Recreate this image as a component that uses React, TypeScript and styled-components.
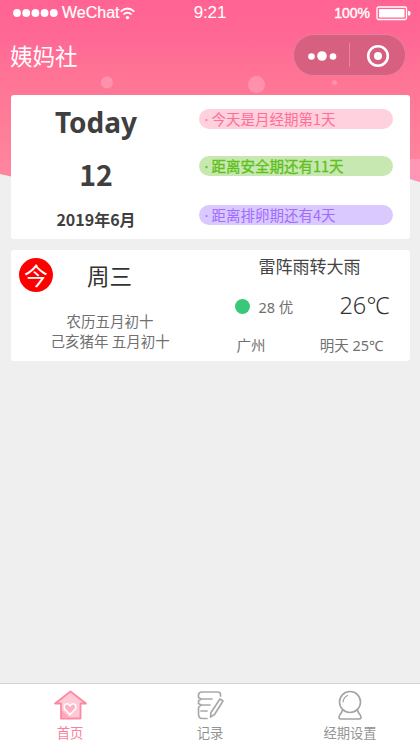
import React from "react";
import styled, { createGlobalStyle } from "styled-components";

const GlobalStyle = createGlobalStyle`
  * { box-sizing: border-box; }
  body {
    margin: 0;
    background: #efefef;
    font-family: "Noto Sans CJK SC", sans-serif;
    color: #3f3f3f;
  }
`;

const Page = styled.div`
  position: relative;
  width: 420px;
  height: 746px;
  display: flex;
  flex-direction: column;
  overflow: hidden;
  background: #efefef;
`;

const Backdrop = styled.svg`
  position: absolute;
  top: 0;
  left: 0;
`;

const StatusBar = styled.header`
  position: relative;
  height: 26px;
  padding: 0 9px 0 13px;
  display: grid;
  grid-template-columns: 1fr auto 1fr;
  align-items: center;
  color: #fff;
  font-family: "Liberation Sans", Arial, sans-serif;
`;

const StatusGroup = styled.div<{ $end?: boolean }>`
  display: flex;
  align-items: center;
  justify-content: ${(p) => (p.$end ? "flex-end" : "flex-start")};
`;

const Carrier = styled.span`
  margin-left: 4px;
  font-size: 16px;
  line-height: 26px;
  -webkit-text-stroke: 0.2px #fff;
`;

const Clock = styled.span`
  margin-left: -4px;
  font-size: 17px;
  line-height: 24px;
  letter-spacing: -0.2px;
`;

const Percent = styled.span`
  margin-right: 6px;
  font-size: 14px;
  line-height: 26px;
  -webkit-text-stroke: 0.4px #fff;
`;

const TitleBar = styled.div`
  position: relative;
  height: 69px;
  padding: 8px 14px 0 10px;
  display: flex;
  justify-content: space-between;
  align-items: flex-start;
`;

const Title = styled.h1`
  margin: 0;
  color: #fff;
  font-size: 22.5px;
  font-weight: 400;
  line-height: 43px;
`;

const Capsule = styled.div`
  width: 113px;
  height: 42px;
  display: flex;
  align-items: center;
  border: 1px solid #e5809d;
  border-radius: 21px;
  background: #d75f80;
`;

const CapsuleButton = styled.button`
  flex: 1;
  height: 40px;
  padding: 2px 0 0;
  display: flex;
  align-items: center;
  justify-content: center;
  border: 0;
  background: none;
`;

const CapsuleDivider = styled.span`
  width: 1px;
  height: 24px;
  background: #e8829f;
`;

const Card = styled.section<{ $height: number }>`
  position: relative;
  width: 399px;
  height: ${(p) => p.$height}px;
  margin: 0 0 11px 10.5px;
  display: grid;
  grid-template-columns: 171px 1fr;
  border-radius: 3px;
  background: #fff;
`;

const DateColumn = styled.div`
  display: flex;
  flex-direction: column;
  align-items: center;
  font-weight: 700;
`;

const Today = styled.div`
  height: 56px;
  font-family: "Noto Sans", sans-serif;
  font-size: 28px;
  line-height: 55px;
`;

const Day = styled.div`
  height: 48px;
  font-size: 28.5px;
  line-height: 46px;
`;

const Month = styled.div`
  height: 40px;
  font-size: 16px;
  line-height: 40px;
`;

const PillList = styled.ul`
  width: 194px;
  margin: 14px 0 0 17px;
  padding: 0;
  display: grid;
  grid-template-rows: 47px 49px 20px;
  align-content: start;
  list-style: none;
`;

const Pill = styled.li<{ $bg: string; $fg: string; $heavy?: boolean }>`
  height: 20px;
  padding-left: 6px;
  display: flex;
  border-radius: 10px;
  background: ${(p) => p.$bg};
  color: ${(p) => p.$fg};
  font-size: 14.5px;
  line-height: 20px;
  white-space: nowrap;
  -webkit-text-stroke: ${(p) => (p.$heavy ? 0.3 : 0)}px ${(p) => p.$fg};
`;

const Bullet = styled.span`
  width: 7px;
  overflow: hidden;
  font-family: "Noto Sans", sans-serif;
`;

const LunarColumn = styled.div`
  display: flex;
  flex-direction: column;
`;

const WeekRow = styled.div`
  height: 61px;
  padding: 8px 0 0 8.500px;
  display: flex;
`;

const TodayBadge = styled.span`
  width: 34px;
  height: 34px;
  flex: none;
  border-radius: 50%;
  background: #ff0000;
  color: #fff;
  font-size: 24px;
  line-height: 34px;
  text-align: center;
`;

const Weekday = styled.span`
  margin-left: 34px;
  color: #333;
  font-size: 22.5px;
  line-height: 35px;
`;

const Lunar = styled.div<{ $shift: number }>`
  height: 20px;
  padding-left: ${(p) => p.$shift}px;
  color: #707070;
  font-size: 14.5px;
  line-height: 20px;
  white-space: nowrap;
`;

const Weather = styled.div`
  display: flex;
  flex-direction: column;
  padding: 0 26px 0 55px;
  color: #707070;
  font-family: "Noto Sans", "Noto Sans CJK SC", sans-serif;
  font-size: 14.5px;
`;

const Condition = styled.div`
  height: 36px;
  padding-left: 22px;
  color: #444;
  font-size: 17px;
  line-height: 34px;
`;

const AirRow = styled.div`
  height: 40px;
  margin-right: -6px;
  display: flex;
  align-items: center;
`;

const AirDot = styled.span`
  width: 15px;
  height: 15px;
  margin-left: -2px;
  border-radius: 50%;
  background: #39c877;
`;

const AirText = styled.span`
  flex: 1;
  margin-left: 9px;
`;

const Temperature = styled.span`
  color: #333;
  font-weight: 300;
  font-size: 23.5px;
  line-height: 36px;
  margin-top: -3px;
`;

const CityRow = styled.div`
  display: flex;
  justify-content: space-between;
  line-height: 39px;
`;

const TabBar = styled.nav`
  height: 63px;
  margin-top: auto;
  display: grid;
  grid-template-columns: repeat(3, 1fr);
  border-top: 1px solid #d3d3d3;
  background: #fff;
`;

const Tab = styled.button<{ $active?: boolean }>`
  padding: 4px 0 0;
  display: flex;
  flex-direction: column;
  align-items: center;
  border: 0;
  background: none;
  color: ${(p) => (p.$active ? "#fb7f9c" : "#939393")};
  font-family: inherit;
  font-size: 13.3px;
  line-height: 20px;
`;

const TabIcon = styled.svg`
  display: block;
  margin-bottom: 1px;
`;

const pills = [
  { text: "今天是月经期第1天", bg: "#ffd1de", fg: "#ff6e94", heavy: false },
  { text: "距离安全期还有11天", bg: "#c7e9b1", fg: "#5fbf1c", heavy: true },
  { text: "距离排卵期还有4天", bg: "#dac9ff", fg: "#a26cff", heavy: false },
];

function HeaderBackdrop() {
  return (
    <Backdrop width="420" height="190" viewBox="0 0 420 190">
      <defs>
        <linearGradient id="sky" x1="0" y1="0" x2="0" y2="1">
          <stop offset="0" stopColor="#ff6393" />
          <stop offset="0.2" stopColor="#ff6895" />
          <stop offset="0.45" stopColor="#ff7595" />
          <stop offset="0.75" stopColor="#ff7f99" />
          <stop offset="1" stopColor="#ff879f" />
        </linearGradient>
      </defs>
      <path d="M0 0H420V182L409 178.500L300 158H100L11 176.500L0 174Z" fill="url(#sky)" />
      <path d="M409 159H420V182L409 178.500Z" fill="#ff96b4" />
      <circle cx="107" cy="82.500" r="6" fill="#ff91ac" />
      <circle cx="256.500" cy="84.500" r="8.500" fill="#ff91ac" />
      <circle cx="334.500" cy="82.500" r="2.500" fill="#ff91ac" />
    </Backdrop>
  );
}

function SignalDots() {
  return (
    <svg width="45" height="10" viewBox="0 0 45 10" fill="#fff">
      {[4, 13.2, 22.4, 31.6, 40.8].map((x) => (
        <circle key={x} cx={x} cy="5" r="3.900" />
      ))}
    </svg>
  );
}

function WifiIcon() {
  return (
    <svg width="15" height="13" viewBox="0 0 15 13" fill="none" stroke="#fff" strokeWidth="1.700">
      <path d="M0.700 4.600Q7.500 -1.600 14.300 4.600" />
      <path d="M3.300 7.500Q7.500 3.600 11.700 7.500" />
      <circle cx="7.500" cy="10.600" r="1.700" fill="#fff" stroke="none" />
    </svg>
  );
}

function BatteryIcon() {
  return (
    <svg width="35" height="15" viewBox="0 0 35 15">
      <rect x="1" y="1" width="29.500" height="12.500" rx="1.500" fill="none" stroke="#fff" strokeWidth="1.300" />
      <rect x="3" y="3" width="25.500" height="8.500" rx="0.500" fill="#fff" />
      <path d="M32 5H33Q34.500 5 34.500 6.500V8Q34.500 9.500 33 9.500H32Z" fill="#fff" />
    </svg>
  );
}

function HomeIcon() {
  return (
    <TabIcon width="36" height="34" viewBox="0 0 36 34">
      <path d="M18.500 3.500L3 15.500H9V30.500H28.500V15.500H34Z" fill="#ffcad6" stroke="#fb8aa5" strokeWidth="1.800" strokeLinejoin="round" />
      <path d="M10 22L18 30H10Z" fill="#ffa6bb" />
      <path d="M18 26.500L12.800 21Q11 17.500 14 16Q16.600 15.300 18 18Q19.500 15.300 22 16Q25 17.500 23.200 21Z" fill="#ffb2c4" stroke="#fff" strokeWidth="1.500" />
    </TabIcon>
  );
}

function NoteIcon() {
  return (
    <TabIcon width="32" height="34" viewBox="0 0 32 34" fill="none" stroke="#a9a9a9" strokeWidth="1.700" strokeLinecap="round" strokeLinejoin="round">
      <path d="M26.500 8V6.500Q26.500 4 23.500 4H8Q4.500 4 4.500 7V9.500L7 11L4.500 13V15.500L7 17L4.500 19.500V26Q4.500 30.500 8 30.500H13" />
      <path d="M7 11H18M7 17H16M7 23H13" />
      <path d="M26 11L29 13L20.500 26.500L16.500 29L17 24.500Z" />
    </TabIcon>
  );
}

function CrystalIcon() {
  return (
    <TabIcon width="34" height="34" viewBox="0 0 34 34" fill="none" stroke="#a3a3a3" strokeWidth="1.600" strokeLinecap="round" strokeLinejoin="round">
      <circle cx="17" cy="14" r="10.500" />
      <path d="M10 14Q10.500 9.500 14.500 7.500" strokeWidth="1.200" />
      <path d="M9.500 22Q9 24.500 6.500 27.500Q5 31 8 31H26Q29 31 27.500 27.500Q25 24.500 24.500 22" />
    </TabIcon>
  );
}

export default function App() {
  return (
    <Page>
      <GlobalStyle />
      <HeaderBackdrop />
      <StatusBar>
        <StatusGroup>
          <SignalDots />
          <Carrier>WeChat</Carrier>
          <WifiIcon />
        </StatusGroup>
        <Clock>9:21</Clock>
        <StatusGroup $end>
          <Percent>100%</Percent>
          <BatteryIcon />
        </StatusGroup>
      </StatusBar>
      <TitleBar>
        <Title>姨妈社</Title>
        <Capsule>
          <CapsuleButton aria-label="More">
            <svg width="30" height="12" viewBox="0 0 30 12" fill="#fff">
              <circle cx="4.500" cy="6.500" r="3.300" />
              <circle cx="15" cy="6" r="4.800" />
              <circle cx="26" cy="6.500" r="3.300" />
            </svg>
          </CapsuleButton>
          <CapsuleDivider />
          <CapsuleButton aria-label="Close">
            <svg width="24" height="24" viewBox="0 0 24 24">
              <circle cx="12" cy="12" r="9.800" fill="none" stroke="#fff" strokeWidth="2.600" />
              <circle cx="12" cy="12" r="4" fill="#fff" />
            </svg>
          </CapsuleButton>
        </Capsule>
      </TitleBar>

      <Card $height={144}>
        <DateColumn>
          <Today>Today</Today>
          <Day>12</Day>
          <Month>2019年6月</Month>
        </DateColumn>
        <PillList>
          {pills.map((p) => (
            <Pill key={p.text} $bg={p.bg} $fg={p.fg} $heavy={p.heavy}>
              <Bullet>·</Bullet>
              {p.text}
            </Pill>
          ))}
        </PillList>
      </Card>

      <Card $height={111}>
        <LunarColumn>
          <WeekRow>
            <TodayBadge>今</TodayBadge>
            <Weekday>周三</Weekday>
          </WeekRow>
          <Lunar $shift={56}>农历五月初十</Lunar>
          <Lunar $shift={40}>己亥猪年 五月初十</Lunar>
        </LunarColumn>
        <Weather>
          <Condition>雷阵雨转大雨</Condition>
          <AirRow>
            <AirDot />
            <AirText>28 优</AirText>
            <Temperature>26℃</Temperature>
          </AirRow>
          <CityRow>
            <span>广州</span>
            <span>明天 25℃</span>
          </CityRow>
        </Weather>
      </Card>

      <TabBar>
        <Tab $active>
          <HomeIcon />
          首页
        </Tab>
        <Tab>
          <NoteIcon />
          记录
        </Tab>
        <Tab>
          <CrystalIcon />
          经期设置
        </Tab>
      </TabBar>
    </Page>
  );
}
